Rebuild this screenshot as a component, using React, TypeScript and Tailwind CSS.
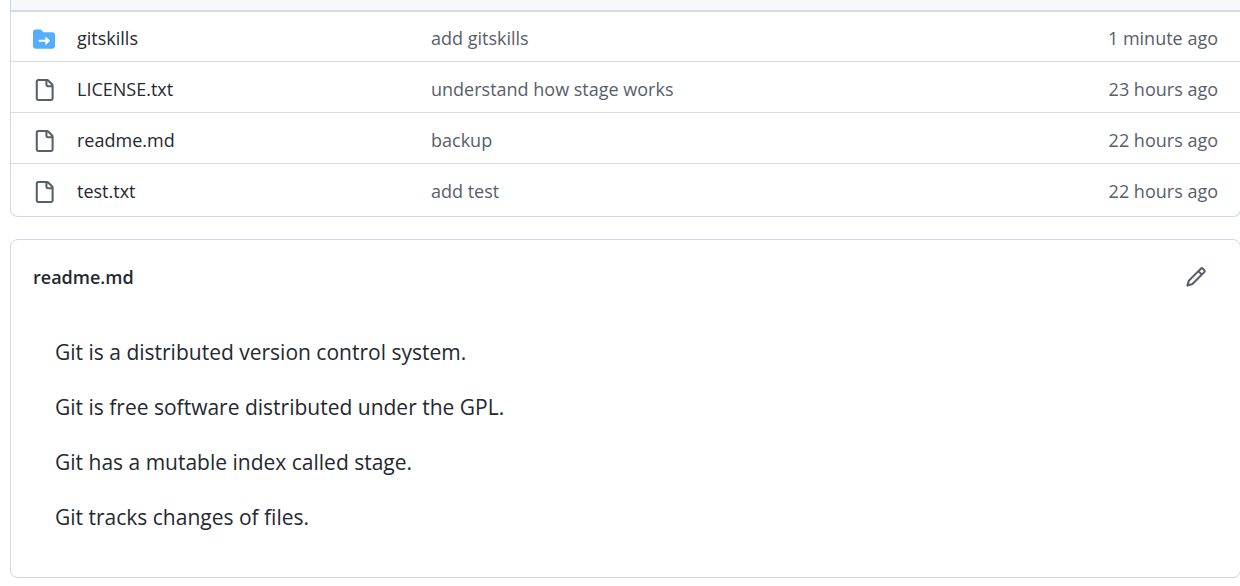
type Entry = { name: string; message: string; age: string; kind: "submodule" | "file" };

const entries: Entry[] = [
  { name: "gitskills", message: "add gitskills", age: "1 minute ago", kind: "submodule" },
  { name: "LICENSE.txt", message: "understand how stage works", age: "23 hours ago", kind: "file" },
  { name: "readme.md", message: "backup", age: "22 hours ago", kind: "file" },
  { name: "test.txt", message: "add test", age: "22 hours ago", kind: "file" },
];

const paragraphs = [
  "Git is a distributed version control system.",
  "Git is free software distributed under the GPL.",
  "Git has a mutable index called stage.",
  "Git tracks changes of files.",
];

function SubmoduleIcon() {
  return (
    <svg viewBox="0 0 16 16" className="size-[22px] fill-[#54aeff]" aria-hidden="true">
      <path d="M0 2.75C0 1.784.784 1 1.75 1H5c.55 0 1.07.26 1.4.7l.9 1.2a.25.25 0 0 0 .2.1h6.75c.966 0 1.75.784 1.75 1.75v8.5A1.75 1.75 0 0 1 14.25 15H1.75A1.75 1.75 0 0 1 0 13.25Zm9.42 9.36 2.883-2.677a.25.25 0 0 0 0-.366L9.42 6.39a.249.249 0 0 0-.42.183V8.5H4.75a.75.75 0 0 0 0 1.5H9v1.927c0 .218.26.331.42.183Z" />
    </svg>
  );
}

function FileIcon() {
  return (
    <svg viewBox="0 0 16 16" className="size-[22px] fill-[#57606a]" aria-hidden="true">
      <path d="M2 1.75C2 .784 2.784 0 3.75 0h6.586c.464 0 .909.184 1.237.513l2.914 2.914c.329.328.513.773.513 1.237v9.586A1.75 1.75 0 0 1 13.25 16h-9.5A1.75 1.75 0 0 1 2 14.25Zm1.75-.25a.25.25 0 0 0-.25.25v12.5c0 .138.112.25.25.25h9.5a.25.25 0 0 0 .25-.25V6h-2.75A1.75 1.75 0 0 1 9 4.25V1.5Zm6.75.062V4.25c0 .138.112.25.25.25h2.688l-.011-.013-2.914-2.914-.013-.011Z" />
    </svg>
  );
}

function PencilIcon() {
  return (
    <svg viewBox="0 0 16 16" className="size-[22px] fill-[#57606a]" aria-hidden="true">
      <path d="M11.013 1.427a1.75 1.75 0 0 1 2.474 0l1.086 1.086a1.75 1.75 0 0 1 0 2.474l-8.61 8.61c-.21.21-.47.364-.756.445l-3.251.93a.75.75 0 0 1-.927-.928l.929-3.25c.081-.286.235-.547.445-.758l8.61-8.61Zm.176 4.823L9.75 4.81l-6.286 6.287a.253.253 0 0 0-.064.108l-.558 1.953 1.953-.558a.253.253 0 0 0 .108-.064Zm1.238-3.763a.25.25 0 0 0-.354 0L10.811 3.75l1.439 1.44 1.263-1.263a.25.25 0 0 0 0-.354Z" />
    </svg>
  );
}

export default function App() {
  return (
    <main className="overflow-hidden bg-white pl-[10px] font-['Open_Sans','Noto_Sans',sans-serif] text-[#24292f]">
      <section className="-mr-px overflow-hidden rounded-b-lg border border-t-0 border-[#d0d7de] pb-0.5">
        <div className="-mb-px h-3 border-b-2 border-[#d4dbe2] bg-[#f6f8fa]" />
        <table className="w-full table-fixed border-collapse text-left text-lg leading-6">
          <tbody>
            {entries.map((entry) => (
              <tr key={entry.name} className="border-b border-[#d8dee4] last:border-b-0">
                <td className="w-[66px] pt-4 pb-[10px] pl-[22px]">
                  {entry.kind === "submodule" ? <SubmoduleIcon /> : <FileIcon />}
                </td>
                <td className="w-[354px] pt-[15px] pb-[11px]">
                  <a href="#" className="hover:underline">{entry.name}</a>
                </td>
                <td className="pt-[15px] pb-[11px] text-[#57606a]">
                  <a href="#" className="hover:underline">{entry.message}</a>
                </td>
                <td className="w-[200px] pt-[15px] pr-[22px] pb-[11px] text-right text-[#57606a]">{entry.age}</td>
              </tr>
            ))}
          </tbody>
        </table>
      </section>

      <section className="mt-[22px] -mr-px rounded-lg border border-[#d0d7de]">
        <header className="flex items-center justify-between pt-[22px] pr-[33px] pl-[22px]">
          <h2 className="text-lg leading-[30px] font-semibold">
            <a href="#">readme.md</a>
          </h2>
          <button type="button" aria-label="Edit readme.md" className="cursor-pointer">
            <PencilIcon />
          </button>
        </header>
        <article className="flex flex-col gap-[22px] px-11 pt-11 pb-[43px] text-[21px] leading-[33px]">
          {paragraphs.map((text) => (
            <p key={text}>{text}</p>
          ))}
        </article>
      </section>
    </main>
  );
}
